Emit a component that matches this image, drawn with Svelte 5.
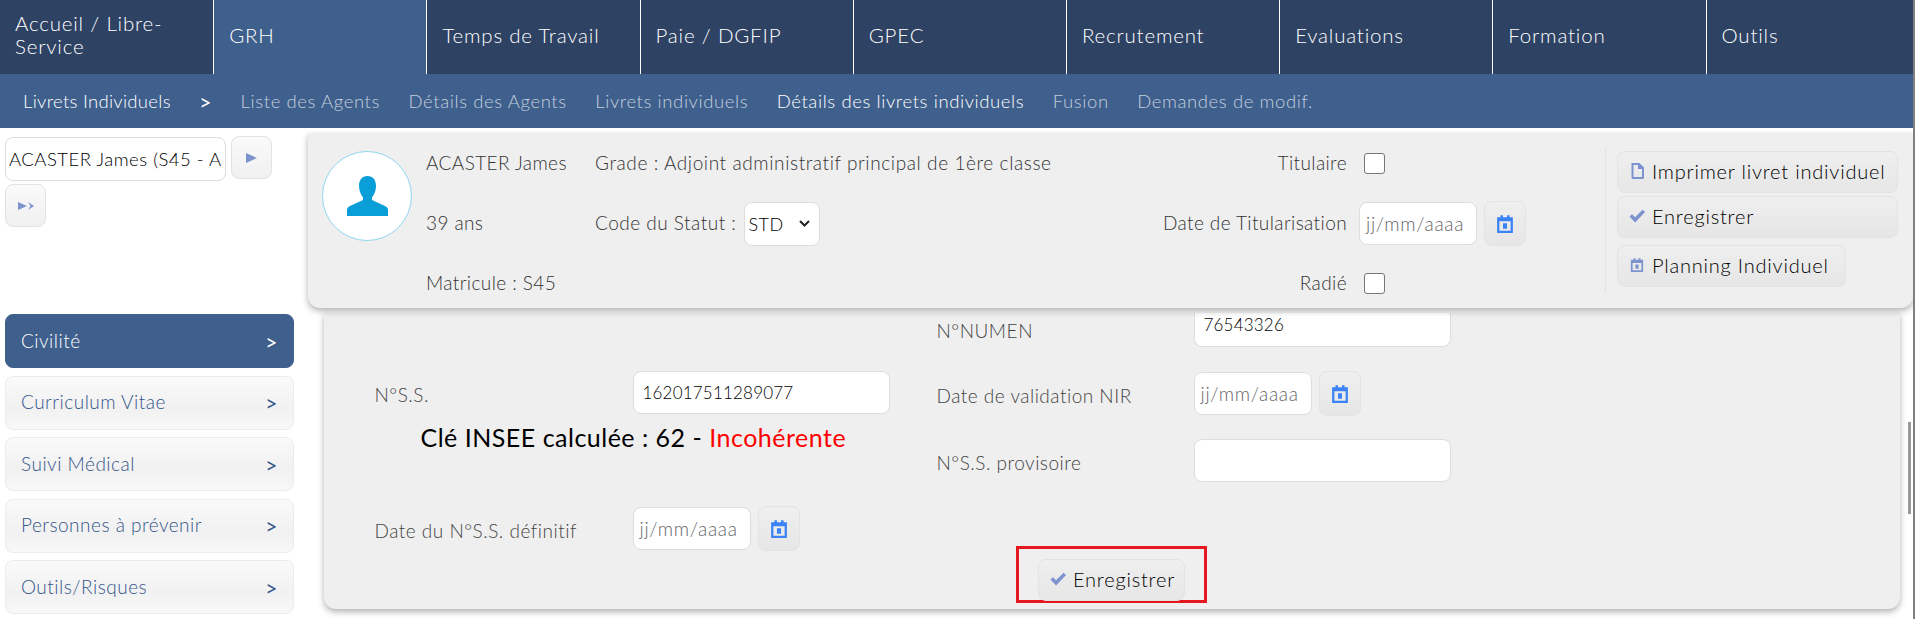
<script>
	const topMenu = ['Accueil / Libre-Service', 'GRH', 'Temps de Travail', 'Paie / DGFIP', 'GPEC', 'Recrutement', 'Evaluations', 'Formation', 'Outils'];
	const subMenu = ['Liste des Agents', 'Détails des Agents', 'Livrets individuels', 'Détails des livrets individuels', 'Fusion', 'Demandes de modif.'];
	const sideMenu = ['Civilité', 'Curriculum Vitae', 'Suivi Médical', 'Personnes à prévenir', 'Outils/Risques'];
</script>

{#snippet calendar(size)}
	<svg width={size} height={size} viewBox="0 0 16 16" fill="currentColor">
		<path fill-rule="evenodd" d="M1 2h3V.3h2.200V2h3.600V.3H12V2h3v14H1zM3 5.600v8.400h10V5.600zM6.200 7.400h3.600v4.800H6.200z" />
	</svg>
{/snippet}

{#snippet check()}
	<svg width="17" height="14" viewBox="0 0 16 14" fill="currentColor">
		<path d="M0 7.500l2.500-2.300 3 3L13 .8 15.600 3 5.600 13.400z" />
	</svg>
{/snippet}

<div class="page">
	<nav class="top">
		{#each topMenu as item, i}
			<a class="top-item" class:active={i === 1}>{item}</a>
		{/each}
	</nav>

	<nav class="sub">
		<span class="sub-title">Livrets Individuels</span>
		<b class="sub-arrow">&gt;</b>
		{#each subMenu as item, i}
			<a class="sub-item" class:current={i === 3}>{item}</a>
		{/each}
	</nav>

	<div class="layout">
		<aside class="side">
			<div class="picker">
				<div class="agent"><span>ACASTER James (S45 - Adjoint administratif)</span></div>
				<button class="btn square next" aria-label="Suivant">
					<svg width="11" height="10" viewBox="0 0 11 10" fill="currentColor"><path d="M0 0l11 5-11 5z" /></svg>
				</button>
				<button class="btn square" aria-label="Dernier">
					<svg width="16" height="8" viewBox="0 0 16 8" fill="currentColor"><path d="M0 0l9 4-9 4zM10 0l6 4-6 4 2.500-4z" /></svg>
				</button>
			</div>

			<ul class="menu">
				{#each sideMenu as item, i}
					<li class:selected={i === 0}><span>{item}</span><b>&gt;</b></li>
				{/each}
			</ul>
		</aside>

		<main class="main">
			<section class="head">
				<div class="avatar">
					<svg width="41" height="40" viewBox="0 0 41 40" fill="#0a9ed9">
						<path d="M20.500 0C26 0 29 4 29 10c0 5-2 9-4 11.500V24l13 6c2 1 3 2 3 4v6H0v-6c0-2 1-3 3-4l13-6v-2.500C14 19 12 15 12 10 12 4 15 0 20.500 0z" />
					</svg>
				</div>

				<div class="identity">
					<span>ACASTER James</span>
					<span>39 ans</span>
					<span>Matricule : S45</span>
				</div>

				<div class="grade">
					<span class="grade-text">Grade : Adjoint administratif principal de 1ère classe</span>
					<span class="statut">Code du Statut :
						<span class="select">STD
							<svg width="11" height="7" viewBox="0 0 11 7" fill="none" stroke="#222" stroke-width="2"><path d="M1 1l4.500 4.500L10 1" /></svg>
						</span>
					</span>
				</div>

				<div class="status">
					<span class="status-lbl">Titulaire</span>
					<span class="box"></span>
					<span class="status-lbl">Date de Titularisation</span>
					<span class="date-row">
						<span class="input date">jj/mm/aaaa</span>
						<button class="btn cal" aria-label="Calendrier">{@render calendar(18)}</button>
					</span>
					<span class="status-lbl">Radié</span>
					<span class="box"></span>
				</div>

				<div class="actions">
					<button class="btn action">
						<span class="ico">
							<svg width="13" height="16" viewBox="0 0 13 16" fill="none" stroke="currentColor" stroke-width="2"><path d="M1.500 1h6.500l4 4v9.500a.5.500 0 0 1-.5.500h-9.500a.5.500 0 0 1-.5-.5zM8 1v4h4" /></svg>
						</span>
						Imprimer livret individuel
					</button>
					<button class="btn action"><span class="ico">{@render check()}</span> Enregistrer</button>
					<button class="btn action short"><span class="ico">{@render calendar(14)}</span> Planning Individuel</button>
				</div>
			</section>

			<section class="form">
				<div class="cols">
					<div class="col left">
						<div class="row nss">
							<span class="lbl">N°S.S.</span>
							<span class="input wide value">162017511289077</span>
						</div>
						<div class="key">Clé INSEE calculée : 62 - <em>Incohérente</em></div>
						<div class="row defin">
							<span class="lbl">Date du N°S.S. définitif</span>
							<span class="date-row">
								<span class="input date">jj/mm/aaaa</span>
								<button class="btn cal" aria-label="Calendrier">{@render calendar(18)}</button>
							</span>
						</div>
					</div>

					<div class="col right">
						<div class="row numen">
							<span class="lbl">N°NUMEN</span>
							<span class="input wide value cut">76543326</span>
						</div>
						<div class="row valid">
							<span class="lbl">Date de validation NIR</span>
							<span class="date-row">
								<span class="input date">jj/mm/aaaa</span>
								<button class="btn cal" aria-label="Calendrier">{@render calendar(18)}</button>
							</span>
						</div>
						<div class="row prov">
							<span class="lbl">N°S.S. provisoire</span>
							<span class="input wide"></span>
						</div>
					</div>
				</div>

				<div class="submit">
					<div class="outline">
						<button class="btn action save"><span class="ico">{@render check()}</span> Enregistrer</button>
					</div>
				</div>
			</section>
		</main>
	</div>

	<div class="thumb"></div>
</div>

<style>
	:global(body) {
		margin: 0;
		overflow: hidden;
		background: #fff;
		font-family: Lato, 'Open Sans', sans-serif;
	}

	.page {
		position: relative;
		box-sizing: border-box;
		height: 619px;
		overflow: hidden;
		border-right: 2px solid #808080;
		color: #333;
		letter-spacing: 0.5px;
		font-weight: 300;
	}

	.top {
		display: flex;
		height: 74px;
		overflow: hidden;
		background: #2e4263;
	}

	.top-item {
		box-sizing: border-box;
		flex: 0 0 213.2px;
		display: flex;
		align-items: center;
		padding: 0 15px 4px;
		border-left: 1px solid #fff;
		color: #fff;
		font-size: 20.500px;
		line-height: 23px;
		letter-spacing: 0.800px;
	}

	.top-item:first-child {
		border-left: 0;
	}

	.top-item.active {
		background: #3f5f8c;
	}

	.sub {
		display: flex;
		align-items: center;
		height: 54px;
		padding-left: 23px;
		gap: 28.500px;
		background: #3f5f8c;
		font-size: 18.500px;
		letter-spacing: 0.600px;
		color: #c3cfdf;
	}

	.sub-title {
		color: #fff;
		letter-spacing: 0.300px;
	}

	.sub-arrow {
		color: #fff;
		font-size: 21px;
	}

	.sub-item.current {
		color: #fff;
	}

	.layout {
		display: flex;
	}

	.side {
		flex: 0 0 308px;
	}

	.picker {
		display: flex;
		flex-wrap: wrap;
		box-sizing: border-box;
		width: 275px;
		height: 186px;
		padding: 9px 0 0 5px;
		gap: 3px 5px;
		align-content: flex-start;
	}

	.agent {
		box-sizing: border-box;
		width: 221px;
		height: 44px;
		display: flex;
		align-items: center;
		overflow: hidden;
		padding: 0 3px;
		background: #fff;
		border: 1px solid #ddd;
		border-radius: 8px;
		color: #000;
		font-size: 18.500px;
		white-space: nowrap;
	}

	.agent span {
		overflow: hidden;
	}

	.btn {
		box-sizing: border-box;
		display: flex;
		align-items: center;
		border: 1px solid #e3e3e3;
		border-radius: 8px;
		background: linear-gradient(#efefef, #e6e6e6);
		color: #7c93d0;
		font-family: inherit;
		font-weight: inherit;
		letter-spacing: inherit;
		padding: 0;
	}

	.square {
		justify-content: center;
		width: 41px;
		height: 43px;
		background: linear-gradient(#fafafa, #f0f0f0);
	}

	.next {
		margin-top: -1px;
	}

	.menu {
		list-style: none;
		margin: 0 0 0 5px;
		padding: 0;
		width: 289px;
	}

	.menu li {
		box-sizing: border-box;
		display: flex;
		align-items: center;
		justify-content: space-between;
		height: 54px;
		margin-bottom: 7.500px;
		padding: 0 15px 2px 15px;
		border: 1px solid #ececec;
		border-radius: 8px;
		background: linear-gradient(#fafafa, #f1f1f1 60%, #f8f8f8);
		color: #34558a;
		font-size: 19px;
	}

	.menu li b {
		font-size: 21px;
		margin-top: 2px;
	}

	.menu li.selected {
		background: #3f5f8c;
		border-color: #3f5f8c;
		color: #fff;
	}

	.main {
		flex: 1;
		min-width: 0;
		margin-top: 5px;
	}

	.head {
		position: relative;
		z-index: 1;
		display: flex;
		height: 175px;
		background: #efefef;
		border-radius: 0 0 12px 12px;
		box-shadow: 0 3px 6px rgba(0, 0, 0, 0.3);
		font-size: 19px;
		letter-spacing: 0.600px;
	}

	.avatar {
		box-sizing: border-box;
		flex: none;
		display: flex;
		align-items: center;
		justify-content: center;
		width: 90px;
		height: 90px;
		margin: 18px 14px 0 14px;
		border: 1px solid #8fd6f0;
		border-radius: 50%;
		background: #fff;
	}

	.identity,
	.grade {
		display: grid;
		grid-template-rows: 60px 61px 59px;
		align-items: center;
	}

	.identity span,
	.grade-text,
	.status-lbl {
		padding-bottom: 2px;
	}

	.grade-text {
		white-space: nowrap;
	}

	.identity {
		flex: 0 0 169px;
		letter-spacing: 0.400px;
	}

	.grade {
		flex: 0 0 452px;
		min-width: 0;
		width: 452px;
	}

	.statut {
		display: flex;
		align-items: center;
		gap: 8px;
		padding-bottom: 2px;
		letter-spacing: 0.500px;
	}

	.select {
		box-sizing: border-box;
		display: flex;
		align-items: center;
		justify-content: space-between;
		width: 76px;
		height: 44px;
		margin-bottom: -2px;
		padding: 0 9px 0 3px;
		background: #fff;
		border: 1px solid #ddd;
		border-radius: 8px;
		color: #000;
		font-size: 18px;
	}

	.status {
		flex: 0 0 558px;
		display: grid;
		grid-template-columns: 300px auto;
		grid-template-rows: 60px 61px 59px;
		align-items: center;
		justify-items: start;
		column-gap: 12px;
		letter-spacing: 0.400px;
	}

	.status-lbl {
		justify-self: end;
		white-space: nowrap;
	}

	.box {
		box-sizing: border-box;
		width: 21px;
		height: 21px;
		margin-left: 5px;
		border: 1px solid #777;
		border-radius: 3px;
		background: #fff;
	}

	.date-row {
		display: flex;
		align-items: center;
		gap: 7px;
		flex: none;
	}

	.input {
		box-sizing: border-box;
		display: flex;
		align-items: center;
		flex: none;
		height: 43px;
		padding: 0 6px;
		background: #fff;
		border: 1px solid #ddd;
		border-radius: 8px;
		font-size: 19px;
	}

	.date {
		width: 118px;
		color: #666;
		white-space: nowrap;
		overflow: hidden;
		letter-spacing: 0.700px;
	}

	.wide {
		width: 257px;
	}

	.value {
		padding-left: 9px;
		color: #000;
		font-size: 17px;
		letter-spacing: 0.200px;
	}

	.cal {
		justify-content: center;
		width: 42px;
		height: 45px;
		color: #3b82f6;
	}

	.actions {
		flex: none;
		display: flex;
		flex-direction: column;
		align-items: flex-start;
		box-sizing: border-box;
		height: 145px;
		margin-top: 15px;
		padding-left: 11px;
		border-left: 1px solid #e3e3e3;
	}

	.action {
		gap: 6px;
		width: 281px;
		height: 42px;
		margin-top: 3px;
		padding: 0 0 2px 10px;
		color: #000;
		font-size: 20px;
		letter-spacing: 0.800px;
	}

	.action.short {
		width: 229px;
		margin-top: 7px;
	}

	.ico {
		flex: 0 0 18px;
		display: flex;
		justify-content: center;
		color: #7c93d0;
	}

	.form {
		box-sizing: border-box;
		width: 1576px;
		height: 296px;
		margin: 5px 0 0 15.500px;
		overflow: hidden;
		background: #efefef;
		border-radius: 0 0 12px 12px;
		box-shadow: 0 3px 6px rgba(0, 0, 0, 0.3);
		font-size: 19px;
	}

	.cols {
		display: flex;
		height: 233px;
	}

	.row {
		display: flex;
		align-items: center;
	}

	.lbl {
		flex: none;
		color: #444;
	}

	.left {
		flex: 0 0 562px;
		padding-left: 51px;
	}

	.left .lbl {
		width: 258px;
	}

	.nss {
		margin-top: 58px;
	}

	.nss .lbl,
	.defin .lbl,
	.valid .lbl,
	.prov .lbl {
		padding-top: 4px;
	}

	.key {
		margin: 8px 0 0 46px;
		color: #000;
		font-size: 25px;
		font-weight: 400;
		line-height: 30px;
		letter-spacing: 0.500px;
		white-space: nowrap;
	}

	.key em {
		color: #f00;
		font-style: normal;
	}

	.defin {
		margin-top: 54px;
	}

	.right .lbl {
		width: 257px;
	}

	.numen {
		height: 34px;
	}

	.cut {
		height: 34px;
		border-radius: 0 0 8px 8px;
		border-top: 0;
		padding-bottom: 10px;
	}

	.valid {
		margin-top: 24px;
	}

	.prov {
		margin-top: 23px;
	}

	.submit {
		display: flex;
		justify-content: center;
	}

	.outline {
		box-sizing: border-box;
		display: flex;
		justify-content: center;
		width: 191px;
		height: 57px;
		padding-top: 10px;
		border: 3px solid #e4181e;
	}

	.save {
		width: 147px;
		margin-top: 0;
	}

	.thumb {
		position: absolute;
		right: 2px;
		top: 422px;
		width: 3px;
		height: 92px;
		background: #999;
	}
</style>
